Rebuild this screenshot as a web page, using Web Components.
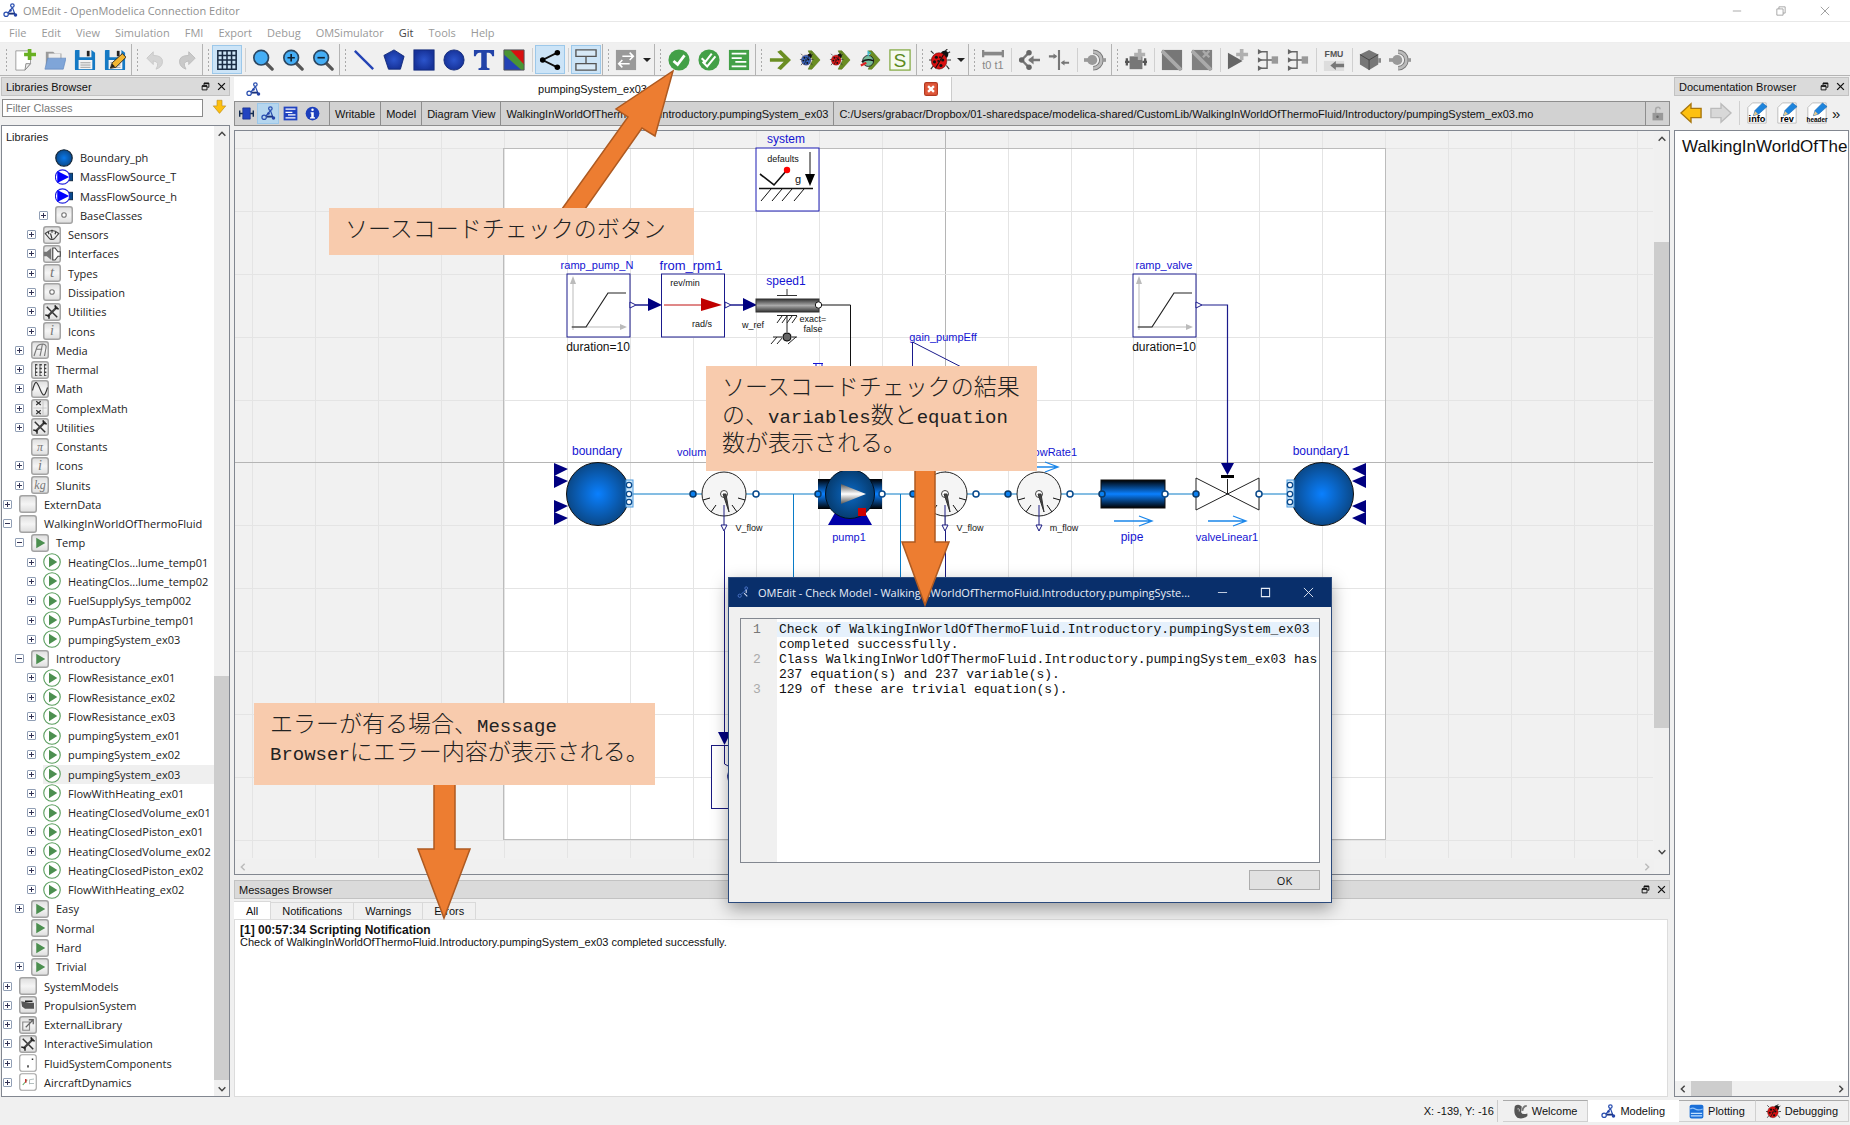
<!DOCTYPE html>
<html lang="ja">
<head>
<meta charset="utf-8">
<title>OMEdit - OpenModelica Connection Editor</title>
<style>
html,body{margin:0;height:100%}
body{font-family:"Liberation Sans","Noto Sans CJK JP",sans-serif;font-size:11px;color:#111;background:#f0f0f0;overflow:hidden}
</style>
</head>
<body>
<om-app></om-app>
<script>
/* ---------- small helper for declaring elements ---------- */
function element(name, css, html, after) {
  customElements.define(name, class extends HTMLElement {
    constructor() { super(); this.attachShadow({ mode: 'open' }); }
    connectedCallback() {
      if (this.shadowRoot.childNodes.length) return;
      const t = document.createElement('template');
      t.innerHTML = '<style>*{box-sizing:border-box}button,input{font:inherit;color:inherit;margin:0}' + css + '</style>' +
        (typeof html === 'function' ? html(this) : html);
      this.shadowRoot.append(t.content.cloneNode(true));
      if (after) after(this);
    }
  });
}

/* ---------- icons, drawn on a 24x24 grid ---------- */
const doc = t => `<path d="M7 1H22V23H2V6Z" fill="#fff" stroke="#bbb"/><path d="M8 15L10 9L18 1L23 5L14 13Z" fill="#1d84dd" stroke="#1560a8" stroke-width=".6"/><path d="M8 15l2-5 3 3z" fill="#e8c88a"/><text x="12" y="22" text-anchor="middle" font-family="Liberation Sans" font-weight="bold" font-size="${t === 'header' ? 7 : 10}">${t}</text>`;
const floppy = '<path d="M2 1H19L23 4V22Q23 23 22 23H2Q1 23 1 22V2Q1 1 2 1Z" fill="#1479c4"/><path d="M6 1H19V9H6Z" fill="#eee"/><path d="M14 2H17V8H14Z" fill="#222"/><path d="M5 12H20V22H5Z" fill="#f4f4f4"/><path d="M7 15H18M7 17.500H18M7 20H18" stroke="#999"/>';
const lens = s => `<path d="M15 15L22 22" stroke="#555" stroke-width="3.500" stroke-linecap="round"/><circle cx="10" cy="9.500" r="8" fill="#45aef5" stroke="#2b4660" stroke-width="1.800"/>${s}`;
const greenHead = '<path d="M10 2H14L23 12L14 22H10L15 12Z" fill="#6b8e23" stroke="#557417" stroke-width=".6"/>';
const bug = (c, s) => `<g ${s || ''}><path d="M5 5L2 2M4 12H0M5 18L2 22M19 18L22 22M20 12H24M16 4L20 0M18 6L23 3" stroke="#333" stroke-width="1.300"/><circle cx="17" cy="6" r="4" fill="#111"/><ellipse cx="11" cy="13" rx="8.500" ry="9" fill="${c}" stroke="#400" stroke-width=".5"/><path d="M16 6L7 21" stroke="#111" stroke-width="1.200"/><g fill="#111"><circle cx="8" cy="9" r="1.700"/><circle cx="6" cy="14" r="1.700"/><circle cx="12" cy="9" r="1"/><circle cx="15" cy="12" r="1.700"/><circle cx="13" cy="18" r="1.700"/><circle cx="10" cy="13" r="1"/></g></g>`;
const gbox = '<rect x="1" y="1" width="22" height="22" rx="3" fill="url(#pg)" stroke="#a3a3a3" stroke-width="2"/>';
const pg = '<defs><linearGradient id="pg" x2="0" y2="1"><stop offset="0" stop-color="#ddd"/><stop offset=".5" stop-color="#f5f5f5"/><stop offset="1" stop-color="#ddd"/></linearGradient><radialGradient id="bb"><stop offset="0" stop-color="#0a78ea"/><stop offset="1" stop-color="#0a4a8c"/></radialGradient><radialGradient id="sh"><stop offset="0" stop-color="#2c55cc"/><stop offset="1" stop-color="#17339a"/></radialGradient></defs>';
const gtext = (t, f) => gbox + `<text x="12" y="17" text-anchor="middle" font-family="Liberation Serif" font-style="italic" font-size="${f || 16}" fill="#777">${t}</text>`;
const tree3 = '<path d="M3 3H11V21H3M3 12H17M11 3" fill="none" stroke="#666" stroke-width="1.500"/><path d="M1 0L6 3L1 6ZM1 9L6 12L1 15ZM1 18L6 21L1 24Z" fill="#666"/><path d="M16 8H23V16H16Z" fill="#999"/>';
const fmi = '<path d="M0 10H7V14H0Z" fill="#999"/><circle cx="9" cy="12" r="5.500" fill="#999"/><path d="M10 3A9 9 0 0 1 10 21" fill="none" stroke="#777" stroke-width="5"/><path d="M10 3A9 9 0 0 1 10 21" fill="none" stroke="#bbb" stroke-width="3"/><path d="M20 10H24V14H20Z" fill="#999"/>';
const ICONS = {
  omedit: '<g fill="none" stroke="#2a4fb0" stroke-width="2"><circle cx="5" cy="18" r="3.500"/><circle cx="15" cy="4" r="2.800"/><path d="M8 16L13 10L15 7M15 7L19 18"/></g><path d="M9 17H19" stroke="#1b337c" stroke-width="3"/><circle cx="12" cy="12" r="2" fill="#2443a8"/><circle cx="20" cy="19" r="2.800" fill="#2443a8"/>',
  omlight: '<g fill="none" stroke="#4f78d0" stroke-width="1.600"><circle cx="5" cy="18" r="3"/><circle cx="17" cy="4" r="2.500"/><path d="M8 15L12 11L17 7"/></g><path d="M13 13L19 19M17 7V13" stroke="#cdd6ee" stroke-width="2"/>',
  new: '<path d="M2 2H18V16L12 23H2Z" fill="#fff" stroke="#999"/><path d="M12 23L13 16L18 16Z" fill="#eee" stroke="#888"/><path d="M15 0H19V4H24V8H19V12H15V8H11V4H15Z" fill="#68b022"/>',
  open: '<path d="M2 3H10L12 5H19V20H2Z" fill="#9a9a9a"/><path d="M5 5H18V12H5Z" fill="#eee"/><path d="M1 22L4 10H24L21 22Z" fill="#7fa5d8" stroke="#5f86bd" stroke-width=".7"/>',
  save: floppy,
  saveas: floppy + '<path d="M7 21L9 15L20 5L24 9L13 20Z" fill="#f2b632" stroke="#222"/><path d="M7 21l2-5 3 3z" fill="#222"/>',
  undo: '<path d="M2 10L9 3V7Q20 7 19 15Q18 20 12 22Q17 14 9 13V17Z" fill="#d5d5d5" stroke="#c8c8c8"/>',
  redo: '<path d="M22 10L15 3V7Q4 7 5 15Q6 20 12 22Q7 14 15 13V17Z" fill="#c9c9c9" stroke="#bbb"/>',
  grid: '<path d="M2 2H22V22H2ZM7 2V22M12 2V22M17 2V22M2 7H22M2 12H22M2 17H22" fill="#cfe6f7" stroke="#1a2c44" stroke-width="1.700"/>',
  zoom: lens(''), zoomin: lens('<path d="M6 9.500H14M10 5.500V13.500" stroke="#123" stroke-width="1.800"/>'), zoomout: lens('<path d="M6 9.500H14" stroke="#123" stroke-width="1.800"/>'),
  line: '<path d="M2 2L22 22" stroke="#2443b4" stroke-width="2.600"/>',
  poly: '<path d="M12 1L23 8L19 22H6L1 7Z" fill="url(#sh)" stroke="#122a7a"/>',
  rect: '<rect x="1" y="1" width="22" height="22" fill="url(#sh)" stroke="#122a7a"/>',
  ell: '<circle cx="12" cy="12" r="11" fill="url(#sh)" stroke="#122a7a"/>',
  text: '<path d="M1 1H23V8H21Q20 4 17 4H15V19Q15 21 18 21V23H6V21Q9 21 9 19V4H7Q4 4 3 8H1Z" fill="#2243a8"/>',
  bitmap: '<path d="M1 1H23V23H1Z" fill="#2443b4"/><path d="M6 1H23V18Z" fill="#d81010"/><path d="M1 1H8L23 17V23H20L1 6Z" fill="#4a9434"/><path d="M1 1H23V23H1Z" fill="none" stroke="#555"/>',
  connect: '<path d="M20 4L4 12L20 20" fill="none" stroke="#111" stroke-width="2"/><circle cx="20" cy="4" r="3"/><circle cx="4" cy="12" r="3"/><circle cx="20" cy="20" r="3"/>',
  trans: '<path d="M12 8V16" stroke="#555" stroke-width="1.500"/><path d="M1 1H23V8H1ZM1 16H23V23H1Z" fill="#d7e9f7" stroke="#555" stroke-width="1.500"/>',
  simulate: '<path d="M1 1H23V23H1Z" fill="#999"/><path d="M8 8H20M16 4L20 8L16 12M16 16H4M8 12L4 16L8 20" fill="none" stroke="#fff" stroke-width="1.700"/>',
  check: '<circle cx="12" cy="12" r="11.500" fill="#43a047"/><path d="M6 13L10.500 17L18 7" fill="none" stroke="#fff" stroke-width="3"/>',
  checkall: '<circle cx="12" cy="12" r="11.500" fill="#43a047"/><path d="M4 10L8 14L15 5M5 14L10 19L19 8" fill="none" stroke="#fff" stroke-width="2.200"/>',
  inst: '<path d="M1 1H23V23H1Z" fill="#43a047"/><path d="M4 5H20M4 10H15M8 14H20M4 19H20" stroke="#fff" stroke-width="2"/>',
  arrow: '<path d="M1 10H16L9 3L13 1L24 12L13 23L9 21L16 14H1Z" fill="#6b8e23"/>',
  simbug: greenHead + bug('#3763b8', 'transform="translate(1 4) scale(.62)"'),
  simred: greenHead + bug('#d81818', 'transform="translate(1 4) scale(.62)"'),
  simanim: greenHead + '<circle cx="10" cy="13" r="6" fill="#7b9" stroke="#222"/><path d="M3 14Q9 10 16 13" stroke="#111" stroke-width="1.500" fill="none"/><path d="M10 8V3L13 5" stroke="#3ab8c8" stroke-width="1.500" fill="none"/><path d="M2 18L8 15" stroke="#d22" stroke-width="2.500"/>',
  ssim: '<rect x="1" y="1" width="22" height="22" fill="#f6faf0" stroke="#7ea63c" stroke-width="1.300"/><text x="12" y="20" text-anchor="middle" font-family="Liberation Sans" font-size="21" fill="#5c8a1c">S</text>',
  bug: bug('#d81010'),
  t0: '<path d="M1 1V9M23 1V9" stroke="#888" stroke-width="3"/><path d="M2 5H22" stroke="#888" stroke-width="4"/><text x="12" y="22" text-anchor="middle" font-family="Liberation Sans" font-size="12" fill="#888">t0 t1</text>',
  oms1: '<path d="M12 4L4 12L12 20M24 12H12" fill="none" stroke="#777" stroke-width="2.500"/><path d="M11 12l6-5v10z" fill="#777"/><circle cx="12" cy="4" r="3" fill="#666"/><circle cx="4" cy="12" r="3" fill="#666"/><circle cx="12" cy="20" r="3" fill="#666"/>',
  oms2: '<path d="M12 1V23M1 8H9M15 15H23" stroke="#777" stroke-width="2.300"/><path d="M6 5L10 8L6 11ZM18 12L14 15L18 18Z" fill="#777"/>',
  fmi: fmi,
  addsys: '<path d="M5 8H19V22H5Z" fill="#777"/><path d="M2 10V18M22 10V18M0 14H5M19 14H24" stroke="#555" stroke-width="2.500"/><path d="M14 0H18V4H22V8H18V12H14V8H10V4H14Z" fill="#b0b0b0"/>',
  pict: '<path d="M1 1H23V23H1Z" fill="#777"/><path d="M1 2L22 23" stroke="#aaa" stroke-width="4"/>',
  pict2: '<path d="M1 1H23V23H1Z" fill="#808080"/><path d="M1 2L22 23" stroke="#aaa" stroke-width="4"/><path d="M13 2L20 9M20 2L13 9" stroke="#aaa" stroke-width="2.500"/>',
  addplay: '<path d="M1 4L17 13L1 22Z" fill="#666"/><path d="M14 0H18V4H23V8H18V12H14V8H10V4H14Z" fill="#b0b0b0"/>',
  tree3: tree3,
  fmu: '<text x="12" y="9" text-anchor="middle" font-family="Liberation Sans" font-weight="bold" font-size="9.500" fill="#555">FMU</text><path d="M1 13H23V24H1Z" fill="#ddd"/><path d="M8 18L14 13V16H23V20H14V23Z" fill="#777"/>',
  cube: '<path d="M11 1L21 6V17L11 23L1 17V6Z" fill="#777"/><path d="M1 6L11 12L21 6M11 12V23" fill="none" stroke="#444"/><path d="M21 10H24V15H21Z" fill="#888"/>',
  down: '<path d="M8 2H16V11H22L12 23L2 11H8Z" fill="#fdc010" stroke="#b98a20"/>',
  back: '<path d="M1 12L12 2V7H23V17H12V22Z" fill="#fdc010" stroke="#a8760c" stroke-width="1.500"/>',
  fwd: '<path d="M23 12L12 2V7H1V17H12V22Z" fill="#d8d8d8" stroke="#bbb" stroke-width="1.500"/>',
  info: doc('info'), rev: doc('rev'), header: doc('header'),
  iconview: '<path d="M6 3H18V21H6Z" fill="#2243c0" stroke="#112a80"/><path d="M1 7V17M23 7V17M1 12H6M18 12H23" stroke="#112a50" stroke-width="2.500"/>',
  textview: '<path d="M1 1H23V23H1Z" fill="#2243c0"/><path d="M4 5H20M4 10H15M8 14H20M4 19H20" stroke="#fff" stroke-width="2"/>',
  docview: '<circle cx="12" cy="12" r="11" fill="#1c3fbc"/><path d="M9 10H14V18H16V20H8V18H10V12H9Z" fill="#fff"/><circle cx="12" cy="6" r="2" fill="#fff"/>',
  lock: '<rect x="4" y="11" width="17" height="12" fill="#999"/><path d="M9 11V6Q9 2 13 2Q16 2 16 5" fill="none" stroke="#aaa" stroke-width="2.500"/><circle cx="12" cy="17" r="2" fill="#666"/>',
  plot: '<rect x="1" y="1" width="22" height="22" rx="3" fill="#1b6fd8"/><path d="M2 8Q6 5 10 8T22 8" fill="none" stroke="#8fc2fa" stroke-width="2"/><path d="M3 15H21M3 19H21" stroke="#bfe0ff" stroke-width="2"/>',
  welcome: '<path d="M3 3Q9 -1 14 4L13 13Q15 18 23 15V19Q16 25 7 22Q0 17 3 3Z" fill="#555"/><path d="M7 8Q11 6 10 12" stroke="#ccc" stroke-width="1.500" fill="none"/><path d="M22 3Q16 3 15 11" stroke="#777" stroke-width="3" fill="none"/>',
  float: '<path d="M8 3H21V14H17M8 3V8" fill="none" stroke="#111" stroke-width="2.500"/><path d="M8 4H21" stroke="#111" stroke-width="4"/><path d="M3 10H16V21H3Z" fill="none" stroke="#111" stroke-width="2.500"/><path d="M3 11H16" stroke="#111" stroke-width="4"/>',
  close: '<path d="M3 3L21 21M21 3L3 21" stroke="#111" stroke-width="3.500"/>',
  redclose: '<rect x="1" y="1" width="22" height="22" rx="3" fill="#e0583a" stroke="#b23a22" stroke-width="2"/><path d="M7 7L17 17M17 7L7 17" stroke="#fff" stroke-width="4"/>',
  up: '<path d="M4 16L12 8L20 16" fill="none" stroke="currentColor" stroke-width="3.500"/>',
  dn: '<path d="M4 8L12 16L20 8" fill="none" stroke="currentColor" stroke-width="3.500"/>',
  lt: '<path d="M16 4L8 12L16 20" fill="none" stroke="currentColor" stroke-width="3.500"/>',
  rt: '<path d="M8 4L16 12L8 20" fill="none" stroke="currentColor" stroke-width="3.500"/>',
  wmin: '<path d="M2 12H22" stroke="currentColor" stroke-width="1.800"/>',
  wmax: '<path d="M3 3H21V21H3Z" fill="none" stroke="currentColor" stroke-width="2.200"/>',
  wres: '<path d="M2 7H17V22H2ZM7 7V2H22V17H17" fill="none" stroke="currentColor" stroke-width="1.800"/>',
  wclose: '<path d="M2 2L22 22M22 2L2 22" stroke="currentColor" stroke-width="2"/>',
  /* library tree */
  t_ball: '<circle cx="12" cy="12" r="11" fill="url(#bb)" stroke="#123" stroke-width="1.500"/>',
  t_mfs: '<path d="M15 7H24V17H15Z" fill="#0a4a8c" stroke="#012"/><circle cx="10" cy="12" r="9.500" fill="#fff" stroke="#22d" stroke-width="1.500"/><path d="M3 4L19 12L3 20Z" fill="#00f"/>',
  t_pkg: gbox,
  t_dot: gbox + '<circle cx="12" cy="12" r="3" fill="#fff" stroke="#777" stroke-width="1.500"/>',
  t_sensor: gbox + '<path d="M3 10Q12 2 21 10L15 17Q12 19 9 17Z" fill="#eee" stroke="#444" stroke-width="1.500"/><path d="M12 5V9M12 17L10 10M7 8l1 3M17 8l-1 3" stroke="#333" stroke-width="1.500"/>',
  t_iface: gbox + '<path d="M1 9H5L11 4V20L5 15H1Z" fill="#777"/><path d="M13 4H16L20 9H23V15H20L16 20H13Z" fill="#fff" stroke="#444" stroke-width="1.500"/>',
  t_types: gtext('t', 20), t_i: gtext('i', 19), t_pi: gtext('π', 16), t_kg: gtext('kg', 16),
  t_tools: gbox + '<path d="M5 5L19 19" stroke="#333" stroke-width="2"/><path d="M19 5L6 18" stroke="#444" stroke-width="3"/><path d="M16 3L17 7L21 8M3 16L8 17L8 21" fill="none" stroke="#222" stroke-width="2"/>',
  t_media: gbox + '<path d="M4 20L8 8Q10 4 16 4Q21 5 20 9L18 20M7 11H15M15 5Q14 12 12 20" fill="none" stroke="#777" stroke-width="1.500"/>',
  t_therm: gbox + '<path d="M6 4V20M12 4V20M18 4V20" fill="none" stroke="#555" stroke-width="1.300"/><path d="M7 4V20M13 4V20M19 4V20" fill="none" stroke="#444" stroke-width="3" stroke-dasharray="2 3"/>',
  t_math: gbox + '<path d="M2 14C6 -2 8 2 12 12S18 24 22 10" fill="none" stroke="#333" stroke-width="1.500"/>',
  t_cmath: gbox + '<path d="M7 3L13 8M13 3L7 8M7 15L13 20M13 15L7 20" stroke="#333" stroke-width="1.500"/><path d="M3 12H21M16 3V21" stroke="#bbb"/>',
  t_play: gbox + '<path d="M7 5L19 12L7 19Z" fill="#4c8f50"/>',
  t_ex: '<circle cx="12" cy="12" r="11" fill="#fff" stroke="#5a9e5e" stroke-width="1.500"/><path d="M8 5L19 12L8 19Z" fill="#4c8f50"/>',
  t_prop: gbox + '<path d="M3 7L14 9H20V17H8L4 14Z" fill="#555"/><path d="M8 7H18" stroke="#222" stroke-width="2"/>',
  t_ext: gbox + '<path d="M5 8H14V19H5Z" fill="none" stroke="#888" stroke-width="1.500"/><path d="M9 15L19 5M13 5H19V11" fill="none" stroke="#666" stroke-width="1.700"/>',
  t_fluid: '<rect x="1" y="1" width="22" height="22" rx="3" fill="#fff" stroke="#a3a3a3" stroke-width="1.500"/><path d="M12 15V18M17 7H19" stroke="#333" stroke-width="2"/>',
  t_air: '<rect x="1" y="1" width="22" height="22" rx="3" fill="#fff" stroke="#a3a3a3" stroke-width="1.500"/><path d="M5 16L11 9" stroke="#6a6" stroke-width="1.500"/><path d="M9 8V13" stroke="#c33" stroke-width="2"/><path d="M14 9L20 8M14 14H20M14 9V15" stroke="#9aa" stroke-width="1"/>'
};
element('om-icon', ':host{display:block;width:var(--s,24px);height:var(--s,24px);flex:none}svg{display:block;width:100%;height:100%}',
  el => `<svg viewBox="0 0 24 24" aria-hidden="true">${pg}${ICONS[el.getAttribute('name')] || ''}</svg>`);

/* ---------- window chrome ---------- */
element('title-bar', `:host{display:flex;align-items:center;height:22px;background:#fff;border-bottom:1px solid #e8e8e8;padding:0 8px 0 3px;gap:5px;color:#8f8f8f;font:11px "Open Sans",sans-serif}
  om-icon{--s:15px}span{flex:1}nav{display:flex;gap:34px;margin-right:12px}button{border:0;background:none;padding:0}button om-icon{--s:10px}`,
  `<om-icon name="omedit"></om-icon><span>OMEdit - OpenModelica Connection Editor</span>
  <nav><button aria-label="Minimize"><om-icon name="wmin"></om-icon></button><button aria-label="Restore"><om-icon name="wres"></om-icon></button><button aria-label="Close"><om-icon name="wclose"></om-icon></button></nav>`);

element('menu-bar', `:host{display:flex;height:21px;background:#fff;border-bottom:1px solid #eee;padding-left:1px;font:11px "Open Sans",sans-serif;color:#999}
  button{border:0;background:none;padding:0 7px 0 8px}.on{color:#444}`,
  () => ['File', 'Edit', 'View', 'Simulation', 'FMI', 'Export', 'Debug', 'OMSimulator', 'Git', 'Tools', 'Help'].map(m => `<button class="${m === 'Git' ? 'on' : ''}">${m}</button>`).join(''));

element('tool-button', `:host{display:block;flex:none}
  button{display:flex;align-items:center;justify-content:center;gap:6px;width:30px;height:29px;padding:0;border:1px solid transparent;background:none}
  :host([wide]) button{width:41px}:host([checked]) button{background:#cce4f7;border-color:#9cc8ea}om-icon{--s:22px}
  i{border:4px solid transparent;border-top-color:#222;border-bottom:0}`,
  el => `<button aria-label="${el.getAttribute('icon')}"><om-icon name="${el.getAttribute('icon')}"></om-icon>${el.hasAttribute('wide') ? '<i></i>' : ''}</button>`);

element('tool-group', `:host{display:flex;align-items:center;height:100%;padding-right:1px;border-right:1px solid #b4b4b4}
  :host::before{content:"";width:9px;height:24px;flex:none;background:radial-gradient(circle,#aaa 1px,transparent 1px) 4px 0/3px 4px repeat-y}
  :host(:last-of-type){border:0}`, '<slot></slot>');
element('tool-sep', ':host{display:block;width:6px;height:24px;flex:none;background:linear-gradient(#d0d0d0,#d0d0d0) 3px 0/1px 100% no-repeat}', '');

const GROUPS = ['new open save saveas', 'undo redo', '*grid | zoom zoomin zoomout', 'line poly rect ell text bitmap | *connect | *trans', '+simulate', 'check checkall inst',
  'arrow simbug simred simanim ssim', '+bug', 't0 | oms1 oms2 | fmi', 'addsys | pict pict2 | addplay tree3 tree3 | fmu | cube fmi'];
element('tool-bar', ':host{display:flex;height:33px;background:#f0f0f0;border-bottom:1px solid #b4b4b4;padding:1px 0 0 1px}',
  () => GROUPS.map(g => '<tool-group>' + g.split(' ').map(n => n === '|' ? '<tool-sep></tool-sep>' :
    `<tool-button icon="${n.replace(/[*+]/, '')}" ${n[0] === '*' ? 'checked' : ''} ${n[0] === '+' ? 'wide' : ''}></tool-button>`).join('') + '</tool-group>').join(''));

/* ---------- docks ---------- */
element('dock-panel', `:host{display:flex;flex-direction:column;min-width:0;min-height:0}
  header{display:flex;align-items:center;gap:7px;height:19px;flex:none;background:#dadada;border:1px solid #c2c2c2;padding:0 3px 0 4px}
  h2{flex:1;font-size:11px;font-weight:normal;margin:0;white-space:nowrap}button{border:0;background:none;padding:0}om-icon{--s:9px}`,
  el => `<header><h2>${el.getAttribute('heading')}</h2><button aria-label="Float"><om-icon name="float"></om-icon></button><button aria-label="Close"><om-icon name="close"></om-icon></button></header><slot></slot>`);

element('scroll-bar', `:host{display:flex;flex-direction:column;width:15px;background:#f0f0f0;align-items:stretch;color:#444;flex:none}
  :host([flat]){flex-direction:row;width:auto;height:15px}:host([off]){color:#bbb}
  button{border:0;background:none;padding:0;width:15px;height:15px;display:flex;align-items:center;justify-content:center}om-icon{--s:10px}
  .track{flex:1;display:flex;flex-direction:inherit}.a{flex:var(--a,0)}.b{flex:var(--b,0);background:#cdcdcd}.c{flex:var(--c,1)}`,
  el => { const f = el.hasAttribute('flat'); return `<button aria-label="Back"><om-icon name="${f ? 'lt' : 'up'}"></om-icon></button><div class="track"><div class="a"></div><div class="b"></div><div class="c"></div></div><button aria-label="Forward"><om-icon name="${f ? 'rt' : 'dn'}"></om-icon></button>`; });

/* level, expander, icon, label */
const ROWS = `3  ball Boundary_ph
3  mfs MassFlowSource_T
3  mfs MassFlowSource_h
3 + dot BaseClasses
2 + sensor Sensors
2 + iface Interfaces
2 + types Types
2 + dot Dissipation
2 + tools Utilities
2 + i Icons
1 + media Media
1 + therm Thermal
1 + math Math
1 + cmath ComplexMath
1 + tools Utilities
1  pi Constants
1 + i Icons
1 + kg SIunits
0 + pkg ExternData
0 - pkg WalkingInWorldOfThermoFluid
1 - play Temp
2 + ex HeatingClos...lume_temp01
2 + ex HeatingClos...lume_temp02
2 + ex FuelSupplySys_temp002
2 + ex PumpAsTurbine_temp01
2 + ex pumpingSystem_ex03
1 - play Introductory
2 + ex FlowResistance_ex01
2 + ex FlowResistance_ex02
2 + ex FlowResistance_ex03
2 + ex pumpingSystem_ex01
2 + ex pumpingSystem_ex02
2 + ex pumpingSystem_ex03 *
2 + ex FlowWithHeating_ex01
2 + ex HeatingClosedVolume_ex01
2 + ex HeatingClosedPiston_ex01
2 + ex HeatingClosedVolume_ex02
2 + ex HeatingClosedPiston_ex02
2 + ex FlowWithHeating_ex02
1 + play Easy
1  play Normal
1  play Hard
1 + play Trivial
0 + pkg SystemModels
0 + prop PropulsionSystem
0 + ext ExternalLibrary
0 + tools InteractiveSimulation
0 + fluid FluidSystemComponents
0 + air AircraftDynamics`.split('\n').map(l => l.split(' '));

element('tree-row', `:host{display:flex;align-items:center;flex:1 1 0;min-height:0;padding-left:calc(1px + var(--l)*12px);white-space:nowrap}
  .e{width:9px;height:9px;margin-right:7px;flex:none}.box{border:1px solid #919fb5;border-radius:1px;background:linear-gradient(#335,#335) center/5px 1px no-repeat,#fff;padding:0}
  .plus{background:linear-gradient(#335,#335) center/5px 1px no-repeat,linear-gradient(#335,#335) center/1px 5px no-repeat,#fff}
  .r{display:flex;align-items:center;align-self:stretch;flex:1;gap:7px}:host([sel]) .r{background:#efefef}om-icon{--s:18px}`,
  el => { const e = el.getAttribute('exp'); return (e ? `<button class="e box ${e === '+' ? 'plus' : ''}" aria-label="Toggle"></button>` : '<span class="e"></span>') + `<div class="r"><om-icon name="t_${el.getAttribute('icon')}"></om-icon><span><slot></slot></span></div>`; });

element('library-tree', `:host{display:flex;flex-direction:column;flex:1;min-height:0}
  form{display:flex;align-items:flex-start;gap:9px;height:29px;padding:3px 3px 0 1px;margin:0}label{flex:1;display:flex}input{width:100%;height:18px;border:1px solid #8a8a8a;background:#fff;padding:0 3px}
  input::placeholder{color:#777;opacity:1}form button{border:0;background:none;padding:0}form om-icon{--s:15px}
  .frame{flex:1;min-height:0;display:flex;border:1px solid #828790;background:#fff;margin-bottom:28px}
  .list{flex:1;min-width:0;display:flex;flex-direction:column;padding-bottom:4px;font:11px "Open Sans",sans-serif;color:#222}
  h3{margin:0;height:22px;padding-left:4px;font:11px/22px "Liberation Sans",sans-serif;flex:none}`,
  () => `<form><label><input type="text" placeholder="Filter Classes" aria-label="Filter Classes"></label><button type="button" aria-label="Expand"><om-icon name="down"></om-icon></button></form>
  <div class="frame"><div class="list"><h3>Libraries</h3>${ROWS.map(([l, e, ...r]) => { const [ic, tx, s] = r[0] === '' ? r.slice(1) : r; return `<tree-row style="--l:${l}" ${e ? `exp="${e}"` : ''} icon="${ic}" ${s ? 'sel' : ''}>${tx}</tree-row>`; }).join('')}</div>
  <scroll-bar style="--a:536;--b:404;--c:1"></scroll-bar></div>`);

element('doc-view', `:host{display:flex;flex-direction:column;flex:1;min-height:0}
  nav{display:flex;align-items:center;height:34px;padding:0 2px}nav tool-button{width:30px}nav span{font-size:15px}
  .frame{flex:1;min-height:0;display:flex;flex-direction:column;border:1px solid #828790;background:#fff;margin-bottom:28px}
  p{flex:1;margin:0;padding:6px 0 0 7px;font-size:17px;line-height:20px;white-space:nowrap}`,
  `<nav><tool-button icon="back"></tool-button><tool-button icon="fwd"></tool-button><tool-sep></tool-sep><tool-button icon="info"></tool-button><tool-button icon="rev"></tool-button><tool-button icon="header"></tool-button><span>»</span></nav>
  <div class="frame"><p>WalkingInWorldOfThe</p><scroll-bar flat style="--a:1;--b:41;--c:100"></scroll-bar></div>`);

/* ---------- diagram ---------- */
const T = (x, y, s, o = {}) => `<text x="${x}" y="${y}" font-size="${o.f || 12}" fill="${o.c || '#1414d2'}" text-anchor="${o.a || 'middle'}">${s}</text>`;
const K = '#111';
const port = (x, full) => `<circle cx="${x}" cy="494" r="3" fill="${full ? '#0a80f0' : '#fff'}" stroke="${full ? '#0a3a6a' : '#0a4a8c'}" stroke-width="1.500"/>`;
const wire = (a, b) => `<path d="M${a} 494H${b}" stroke="#0a7cc8" stroke-width="1.200"/>`;
const sensor = (x, l) => `<circle cx="${x}" cy="494" r="22" fill="#f5f5f5" stroke="#222"/>
  <path d="M${x - 21} 500l7-2M${x + 21} 500l-7-2M${x - 13} 512l5-7M${x + 13} 512l-5-7" stroke="#111"/><path d="M${x} 505V525" stroke="#1a1a80"/><circle cx="${x}" cy="494" r="3.500" fill="#fff" stroke="#444"/><path d="M${x - 1} 494L${x + 5} 512L${x + 2} 494Z" stroke="#333" fill="#444"/>
  <path d="M${x - 3} 525H${x + 3}L${x} 531Z" fill="#fff" stroke="#1a1a80"/>` + T(x + 25, 531, l, { f: 9, c: K });
const ramp = x => `<rect x="${x}" y="274" width="63" height="63" fill="#fff" stroke="#1a1a8c"/><path d="M${x + 6} 330V280M${x + 4} 327H${x + 56}" stroke="#bbb" fill="none"/><path d="M${x + 3} 284L${x + 6} 276L${x + 9} 284ZM${x + 53} 324V330L${x + 60} 327Z" fill="#bbb"/>
  <path d="M${x + 5} 327H${x + 19}L${x + 41} 293H${x + 59}" stroke="#222" fill="none" stroke-width="1.200"/><path d="M${x + 63} 302L${x + 69} 305L${x + 63} 308Z" fill="#fff" stroke="#1a1a8c"/>` + T(x + 31, 351, 'duration=10', { c: K });
const flow = (x, y) => `<path d="M${x} ${y}H${x + 37}M${x + 25} ${y - 5}L${x + 38} ${y}L${x + 25} ${y + 5}" fill="none" stroke="#1a86ea" stroke-width="1.300"/>`;
const tris = (b, t) => [463, 475, 500, 512].map(y => `<path d="M${b} ${y}V${y + 13}L${t} ${y + 6}Z" fill="#000080"/>`).join('');
const triport = x => `<rect x="${x - 3}" y="480" width="7" height="27" fill="#cfe8fa" stroke="#4a9ade"/>` + [485, 494, 502].map(y => `<circle cx="${x}" cy="${y}" r="2.700" fill="#fff" stroke="#0a4a8c" stroke-width="1.300"/>`).join('');
function diagram() {
  let g = '<rect x="504" y="148" width="881" height="692" fill="#fff"/>';
  for (let i = -11; i <= 11; i++) g += `<path d="M${Math.round(944.6 + i * 62.95)}.5 131V858" stroke="${i ? '#e4e4e4' : '#b5b5b5'}"/>`;
  for (let j = -5; j <= 6; j++) g += `<path d="M235 ${Math.round(462.4 + j * 62.85)}.5H1653" stroke="${j ? '#e4e4e4' : '#b5b5b5'}"/>`;
  g += '<rect x="503.500" y="148.500" width="882" height="691" fill="none" stroke="#bcbcbc"/>';
  /* system */
  g += T(786, 143, 'system') + `<rect x="756" y="148" width="63" height="63" fill="#fff" stroke="#1c1cb4"/>` + T(783, 162, 'defaults', { f: 9, c: K }) +
    `<path d="M760 174L774 185L787 170" fill="none" stroke="#111" stroke-width="1.600"/><circle cx="787" cy="170" r="3.200" fill="#f00"/><path d="M810 152V178" stroke="#111"/><path d="M805 174H815L810 186Z"/>
    <path d="M759 188.500H813" stroke="#111" stroke-width="1.500"/><path d="M761 201L771 189M772 201L782 189M782 201L792 189M794 201L804 189" stroke="#111"/>` + T(798, 183, 'g', { f: 11, c: K });
  /* drive chain */
  g += T(597, 269, 'ramp_pump_N', { f: 11 }) + ramp(567) + '<path d="M636 305H649" stroke="#1a1a8c" stroke-width="1.500"/><path d="M648 298V311L662 305Z" fill="#000080"/>';
  g += T(691, 270, 'from_rpm1', { f: 13 }) + '<rect x="661.500" y="274" width="63" height="63" fill="#fff" stroke="#1a1a8c"/><path d="M664 305H702" stroke="#c01010"/><path d="M701 298V311L722 305Z" fill="#c00000"/>' +
    T(685, 286, 'rev/min', { f: 9, c: K }) + T(702, 327, 'rad/s', { f: 9, c: K }) + '<path d="M725 302L731 305L725 308Z" fill="#fff" stroke="#1a1a8c"/><path d="M731 305H744" stroke="#1a1a8c" stroke-width="1.500"/><path d="M743 298V311L757 305Z" fill="#000080"/>';
  g += T(786, 285, 'speed1') + '<path d="M787 289V295M777 295.500H797" stroke="#333"/><rect x="756" y="299" width="63" height="13" fill="url(#shaft)" stroke="#333"/><circle cx="818.500" cy="305" r="3.200" fill="#fff" stroke="#111"/><path d="M822 305H850.500V380" fill="none" stroke="#111"/>' +
    '<path d="M777 315.500H797M787 316V336M777 323L782 316M782 323L787 316M787 323L792 316M792 323L797 316M773 337H797M771 344L777 337M777 344L783 337M788 344L796 337" stroke="#222"/><circle cx="787" cy="337" r="5" fill="#bbb"/><circle cx="787" cy="337" r="4" fill="#666" stroke="#111"/>' +
    T(753, 328, 'w_ref', { f: 9, c: K }) + T(813, 322, 'exact=', { f: 9, c: K }) + T(813, 332, 'false', { f: 9, c: K }) + '<path d="M813 363.500H823M816 364V370M822 364V370" stroke="#1414d2"/>';
  g += T(943, 341, 'gain_pumpEff', { f: 11 }) + '<path d="M912.500 400V342L975 374" fill="none" stroke="#1a1a8c"/>';
  g += T(1164, 269, 'ramp_valve', { f: 11 }) + ramp(1133) + '<path d="M1202 305H1227.500V464" fill="none" stroke="#1a1a8c" stroke-width="1.200"/>';
  /* fluid line */
  g += wire(630, 1290) + '<path d="M793.500 494V600M900.500 494V600" stroke="#0a7cc8" fill="none"/><path d="M724.500 531V732M945.500 531V600" stroke="#1a1a80"/>';
  g += tris(554, 568) + '<circle cx="598" cy="494" r="31.500" fill="url(#ball)" stroke="#111"/>' + triport(629) + T(597, 455, 'boundary') + T(677, 456, 'volum', { a: 'start', f: 11 });
  g += port(693, 1) + sensor(724, 'V_flow') + port(756) + sensor(945, 'V_flow') + port(913, 1) + port(976) + port(1008, 1) + sensor(1039, 'm_flow') + port(1070);
  g += '<path d="M828 525L836 511H864L872 525Z" fill="#0000a8"/><rect x="818" y="479" width="64" height="30" fill="url(#pipe)"/><circle cx="850" cy="494" r="24.500" fill="url(#dk)" stroke="#012"/><path d="M841 484L866 494L841 504Z" fill="url(#cone)"/><rect x="858" y="508" width="8" height="8" fill="#d00000"/>' + port(818, 1) + port(882) + T(849, 541, 'pump1', { f: 11 });
  g += T(1077, 456, 'owRate1', { a: 'end', f: 11 }) + flow(1020, 467) + '<rect x="1101" y="480" width="64" height="28" fill="url(#pipe)" stroke="#111"/>' + port(1102, 1) + port(1165) + flow(1114, 521) + T(1132, 541, 'pipe');
  g += '<path d="M1196 478V510L1259 478V510Z" fill="#fff" stroke="#222"/><path d="M1227.500 479V494" stroke="#222"/><path d="M1221 463H1234L1227.500 475Z" fill="#000080"/><rect x="1221" y="475" width="13" height="3"/>' + port(1196, 1) + port(1259) + flow(1208, 521) + T(1227, 541, 'valveLinear1', { f: 11 });
  g += tris(1366, 1352) + '<circle cx="1322" cy="494" r="31.500" fill="url(#ball)" stroke="#111"/>' + triport(1290) + T(1321, 455, 'boundary1', { f: 12 });
  g += '<rect x="711.500" y="745.500" width="63" height="63" fill="#fff" stroke="#1a1a80"/><path d="M718 732H731L724.500 745Z" fill="#000080"/><path d="M724.500 745V764L730 767M729 770Q726 776 729 783" stroke="#1a1a80" fill="none"/>';
  return `<svg width="1418" height="727" viewBox="235 131 1418 727" font-family="Liberation Sans"><defs>
  <radialGradient id="ball"><stop offset="0" stop-color="#0a80ff"/><stop offset="1" stop-color="#0a4888"/></radialGradient>
  <radialGradient id="dk"><stop offset="0" stop-color="#0a68c4"/><stop offset="1" stop-color="#063c70"/></radialGradient>
  <linearGradient id="pipe" x2="0" y2="1"><stop offset="0" stop-color="#000"/><stop offset=".5" stop-color="#0a80ff"/><stop offset="1" stop-color="#000"/></linearGradient>
  <linearGradient id="shaft" x2="0" y2="1"><stop offset="0" stop-color="#333"/><stop offset=".5" stop-color="#aaa"/><stop offset="1" stop-color="#333"/></linearGradient>
  <linearGradient id="cone" x2="0" y2="1"><stop offset="0" stop-color="#555"/><stop offset=".5" stop-color="#fff"/><stop offset="1" stop-color="#555"/></linearGradient></defs>${g}</svg>`;
}
element('diagram-view', `:host{display:flex;flex:1;min-height:0;border:1px solid #828790;background:#f1f1f1}
  .col{flex:1;min-width:0;display:flex;flex-direction:column}.area{flex:1;min-height:0;overflow:hidden}svg{display:block}.v{--a:96;--b:485;--c:116;margin-bottom:15px}`,
  () => `<div class="col"><div class="area">${diagram()}</div><scroll-bar flat off style="--a:1;--b:0;--c:0"></scroll-bar></div><scroll-bar class="v"></scroll-bar>`);

element('editor-area', `:host{display:flex;flex-direction:column;flex:1;min-height:0}
  .tabs{display:flex;height:24px;flex:none}.tab{display:flex;align-items:center;width:50%;background:#fff;border-right:1px solid #ccc;padding:0 13px 0 12px}.tab button{border:0;background:none;padding:0}
  .tab span{flex:1;text-align:center}.tab om-icon{--s:15px}.tab button om-icon{--s:14px}
  .bar{display:flex;height:25px;flex:none;align-items:stretch;background:#d2d2d2;border:1px solid #8e8e8e;margin-bottom:4px}
  .bar>*{display:flex;align-items:center;border-right:1px solid #8e8e8e;padding:0 5px;white-space:nowrap}.bar>.path{flex:1}.bar>.views{padding:0;gap:0;width:95px}.bar>:last-child{border:0;padding:0 4px}
  .views button{width:22px;height:21px;padding:0;border:1px solid transparent;background:none;display:flex;align-items:center;justify-content:center}.views .on{background:#b5d6ee;border-color:#9cc8ea}.bar om-icon{--s:15px}`,
  `<div class="tabs"><div class="tab"><om-icon name="omedit"></om-icon><span>pumpingSystem_ex03</span><button aria-label="Close tab"><om-icon name="redclose"></om-icon></button></div></div>
  <div class="bar"><div class="views"><button aria-label="Icon view"><om-icon name="iconview"></om-icon></button><button class="on" aria-label="Diagram view"><om-icon name="omedit"></om-icon></button><button aria-label="Text view"><om-icon name="textview"></om-icon></button><button aria-label="Documentation view"><om-icon name="docview"></om-icon></button></div>
  <span>Writable</span><span>Model</span><span>Diagram View</span><span>WalkingInWorldOfThermoFluid.Introductory.pumpingSystem_ex03</span><span class="path">C:/Users/grabacr/Dropbox/01-sharedspace/modelica-shared/CustomLib/WalkingInWorldOfThermoFluid/Introductory/pumpingSystem_ex03.mo</span><span><om-icon name="lock"></om-icon></span></div>
  <diagram-view></diagram-view>`);

element('message-list', `:host{display:flex;flex-direction:column;flex:1;min-height:0;padding:2px 2px 0 0}
  .tabs{display:flex;align-items:flex-end;height:18px}.tabs button{height:17px;padding:0 11px;border:1px solid #d9d9d9;border-bottom:0;border-left:0;background:#f0f0f0}.tabs .on{height:18px;background:#fff;padding:0 12px}
  .log{flex:1;background:#fff;border:1px solid #dcdcdc;padding:4px 5px;line-height:12px}b{display:block;font-size:12px}`,
  `<div class="tabs" role="tablist"><button class="on" role="tab">All</button><button role="tab">Notifications</button><button role="tab">Warnings</button><button role="tab">Errors</button></div>
  <div class="log"><b>[1] 00:57:34 Scripting Notification</b>Check of WalkingInWorldOfThermoFluid.Introductory.pumpingSystem_ex03 completed successfully.</div>`);

element('status-bar', `:host{display:flex;justify-content:flex-end;align-items:center;height:28px;padding:0 1px 0 0}
  span{padding-right:3px;border-right:1px solid #ccc;height:22px;line-height:22px;margin-right:5px}
  button{display:flex;align-items:center;gap:4px;height:22px;padding:0 10px;border:1px solid #d0d0d0;border-top-color:#aaa;border-left:0;background:#f0f0f0}.on{background:#fff;border-color:#fff;padding:0 13px}om-icon{--s:15px}`,
  `<span>X: -139, Y: -16</span><button><om-icon name="welcome"></om-icon>Welcome</button><button class="on"><om-icon name="omedit"></om-icon>Modeling</button><button><om-icon name="plot"></om-icon>Plotting</button><button><om-icon name="bug"></om-icon>Debugging</button>`);

/* ---------- check result dialog ---------- */
element('check-dialog', `:host{display:flex;flex-direction:column;position:absolute;left:728px;top:577px;width:604px;height:326px;background:#f0f0f0;border:1px solid #2b4a7c;box-shadow:0 6px 16px rgba(0,0,0,.35)}
  header{display:flex;align-items:center;gap:8px;height:29px;flex:none;background:#092f6b;color:#e8eef8;font:11px "Open Sans",sans-serif;padding:0 17px 0 8px}header span{flex:1;white-space:nowrap}
  header om-icon{--s:13px}nav{display:flex;gap:32px}nav om-icon{--s:11px}header button{border:0;background:none;padding:0}
  .box{flex:1;margin:11px 11px 7px;border:1px solid #828790;background:linear-gradient(90deg,#f0f0f0 36px,#fff 36px);padding-top:3px;font:13px/15px "Liberation Mono",monospace}
  .ln{display:flex}.ln i{width:36px;flex:none;font-style:normal;text-align:center;padding-right:4px;color:#aaa}.ln p{margin:0;flex:1;padding-left:2px;white-space:nowrap}.cur{background:#e6f1fc}.ln:first-of-type i{color:#777}.cur i{background:#f0f0f0}
  footer{display:flex;justify-content:flex-end;padding:0 11px 12px}footer button{width:71px;height:20px;padding:0;border:1px solid #adadad;background:#e1e1e1;font:11px "Open Sans",sans-serif}`,
  `<header><om-icon name="omlight"></om-icon><span>OMEdit - Check Model - WalkingInWorldOfThermoFluid.Introductory.pumpingSyste...</span><nav><button aria-label="Minimize"><om-icon name="wmin"></om-icon></button><button aria-label="Maximize"><om-icon name="wmax"></om-icon></button><button aria-label="Close"><om-icon name="wclose"></om-icon></button></nav></header>
  <div class="box"><div class="ln cur"><i>1</i><p>Check of WalkingInWorldOfThermoFluid.Introductory.pumpingSystem_ex03</p></div><div class="ln"><i></i><p>completed successfully.</p></div>
  <div class="ln"><i>2</i><p>Class WalkingInWorldOfThermoFluid.Introductory.pumpingSystem_ex03 has</p></div><div class="ln"><i></i><p>237 equation(s) and 237 variable(s).</p></div><div class="ln"><i>3</i><p>129 of these are trivial equation(s).</p></div></div>
  <footer><button>OK</button></footer>`);

/* ---------- annotations over the window ---------- */
element('call-out', `:host{display:block;position:absolute;background:#f8cbad;padding:9px 16px;font:300 23px/28px "Liberation Mono","Noto Sans CJK JP",monospace;color:#222;white-space:nowrap}::slotted(span){font-size:19px;line-height:1}`, '<slot></slot>');
element('call-arrows', ':host{position:absolute;inset:0;pointer-events:none}svg{display:block;width:100%;height:100%}path{fill:#ed7d31;stroke:#ae5a21;stroke-width:1.500}',
  `<svg><path d="M562 209L628 117L616 109L673 71L655 136L642 128L585 209Z"/><path d="M915 470V542H902L925 605L949 542H935V470Z"/><path d="M434 784V849H418L444 918L470 849H455V784Z"/></svg>`);

element('om-app', `:host{display:flex;flex-direction:column;height:100vh;position:relative}
  main{flex:1;min-height:0;display:flex;gap:4px;padding:1px 1px 0 1px}.left{width:229px;flex:none}.right{width:175px;flex:none}
  .mid{flex:1;min-width:0;display:flex;flex-direction:column;padding-bottom:28px}.msg{height:217px;flex:none;margin-top:5px}
  status-bar{position:absolute;right:0;bottom:0}`,
  `<title-bar></title-bar><menu-bar></menu-bar><tool-bar></tool-bar>
  <main><dock-panel class="left" heading="Libraries Browser"><library-tree></library-tree></dock-panel>
  <div class="mid"><editor-area></editor-area><dock-panel class="msg" heading="Messages Browser"><message-list></message-list></dock-panel></div>
  <dock-panel class="right" heading="Documentation Browser"><doc-view></doc-view></dock-panel></main>
  <status-bar></status-bar>
  <check-dialog></check-dialog><call-arrows></call-arrows>
  <call-out style="left:329px;top:208px;width:365px;height:47px">ソースコードチェックのボタン</call-out>
  <call-out style="left:706px;top:366px;width:331px;height:105px">ソースコードチェックの結果<br>の、<span>variables</span>数と<span>equation</span><br>数が表示される。</call-out>
  <call-out style="left:254px;top:703px;width:401px;height:82px">エラーが有る場合、<span>Message</span><br><span>Browser</span>にエラー内容が表示される。</call-out>`);
</script>
</body>
</html>
